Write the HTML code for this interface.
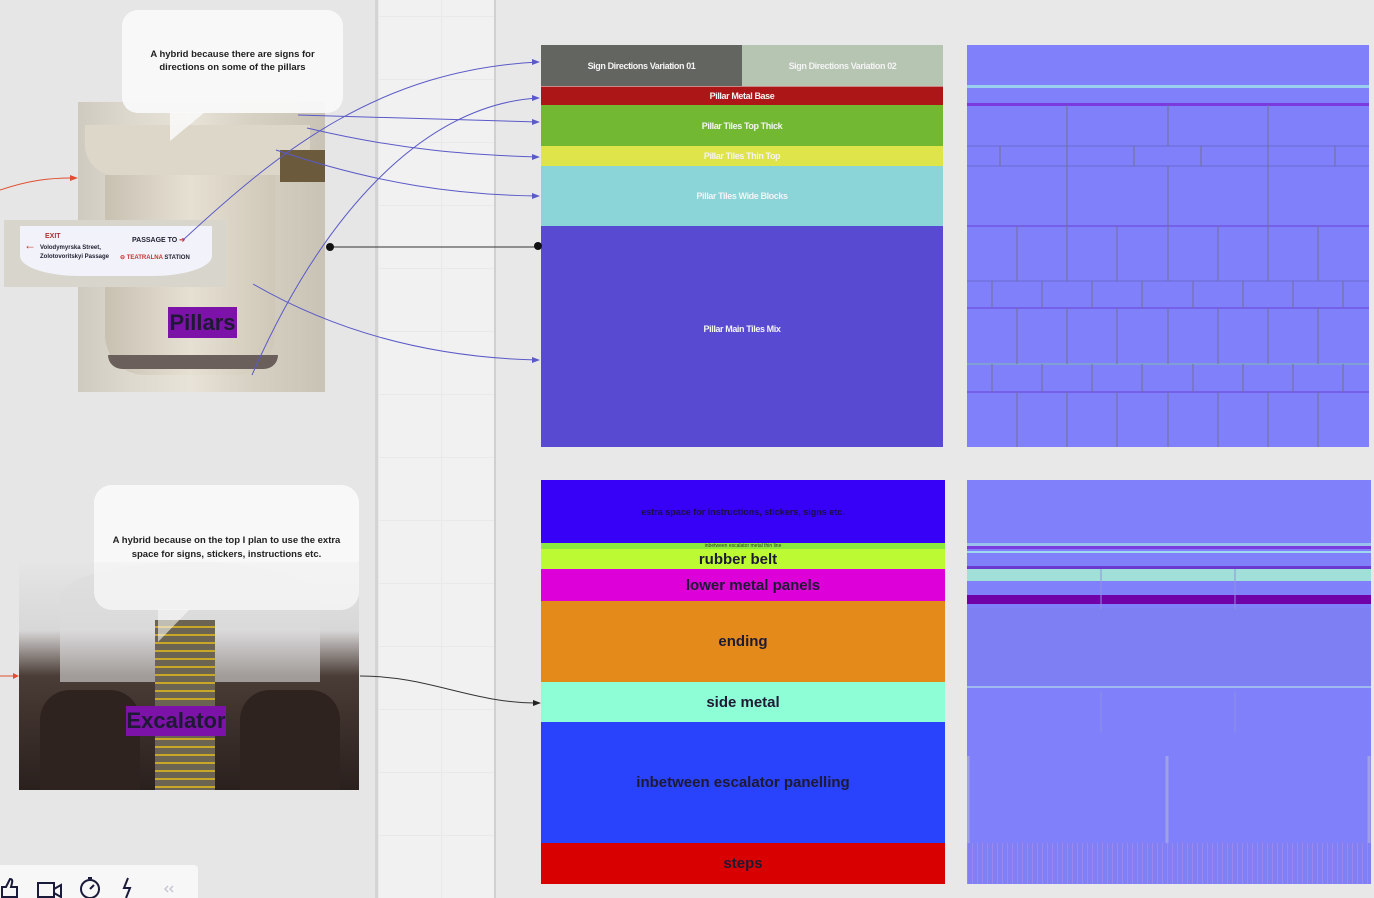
<!DOCTYPE html>
<html><head><meta charset="utf-8"><style>
*{margin:0;padding:0;box-sizing:border-box}
body{width:1374px;height:898px;overflow:hidden;background:#e6e6e6;position:relative;font-family:"Liberation Sans",sans-serif}
.a{position:absolute}
.c{display:flex;align-items:center;justify-content:center;text-align:center;font-family:"Liberation Sans",sans-serif}
.w{color:#f4f4f4;font-size:9px;font-weight:bold;letter-spacing:-0.4px}
.k{color:#1e1a33;font-weight:bold}
</style></head><body>
<div class="a" style="left:375px;top:0;width:3px;height:898px;background:#d4d4d4"></div>
<div class="a" style="left:378px;top:0;width:116px;height:898px;background:#f1f1f1;background-image:linear-gradient(#e9e9e9 1px,transparent 1px),linear-gradient(90deg,#e9e9e9 1px,transparent 1px);background-size:63px 63px;background-position:0 16px"></div>
<div class="a" style="left:494px;top:0;width:880px;height:898px;background:#e8e8e8;border-left:2px solid #d0d0d0"></div>

<!-- pillar photo -->
<div class="a" style="left:78px;top:102px;width:247px;height:290px;background:linear-gradient(90deg,#cfcac0 0%,#ddd8cd 20%,#e8e3d8 45%,#d7d1c4 70%,#c9c3b6 100%)"></div>
<div class="a" style="left:105px;top:175px;width:170px;height:200px;background:linear-gradient(90deg,#c8c1b2,#e6e0d3 50%,#cfc8b8);border-radius:0 0 40px 40px"></div>
<div class="a" style="left:85px;top:125px;width:225px;height:50px;background:#ddd7ca;border-radius:0 0 30px 30px"></div>
<div class="a" style="left:280px;top:150px;width:45px;height:32px;background:#6b5a3c"></div>
<div class="a" style="left:108px;top:355px;width:170px;height:14px;background:#6a5f5a;border-radius:0 0 30px 30px"></div>
<div class="a" style="left:4px;top:220px;width:222px;height:67px;background:#d8d6cc"></div>
<div class="a" style="left:20px;top:226px;width:192px;height:50px;background:#f2f2fa;border-radius:0 0 60px 60px/0 0 20px 20px"></div>
<div class="a" style="left:45px;top:233px;font-size:7px;color:#a33;font-weight:bold">EXIT</div>
<div class="a" style="left:24px;top:238px;font-size:12px;color:#c33">←</div>
<div class="a" style="left:40px;top:244px;font-size:6px;color:#223;font-weight:bold;line-height:9px">Volodymyrska Street,<br>Zolotovoritskyi Passage</div>
<div class="a" style="left:132px;top:236px;font-size:7px;color:#223;font-weight:bold">PASSAGE TO <span style="color:#c33">➔</span></div>
<div class="a" style="left:120px;top:254px;font-size:6px;color:#c33;font-weight:bold">⊖ TEATRALNA <span style="color:#223">STATION</span></div>
<div class="a c k" style="left:168px;top:307px;width:69px;height:31px;background:#7d12a8;font-size:22px">Pillars</div>

<!-- bubble 1 -->
<div class="a" style="left:122px;top:10px;width:221px;height:103px;background:rgba(248,248,248,.97);border-radius:16px"></div>
<svg class="a" style="left:170px;top:112px" width="50" height="30"><polygon points="0,0 0,29 35,0" fill="rgba(248,248,248,.9)"/></svg>
<div class="a c" style="left:130px;top:48px;width:205px;font-size:9.5px;color:#222;font-weight:bold;line-height:13px">A hybrid because there are signs for directions on some of the pillars</div>

<!-- escalator photo -->
<div class="a" style="left:19px;top:562px;width:340px;height:228px;background:linear-gradient(#e6e5e5 0%,#d8d7d7 30%,#4a3c36 50%,#2a201d 100%)"></div>
<div class="a" style="left:60px;top:562px;width:260px;height:120px;background:#dcdcdc;border-radius:50% 50% 0 0/30% 30% 0 0;opacity:.6"></div>
<div class="a" style="left:155px;top:620px;width:60px;height:170px;background:repeating-linear-gradient(#6b6452 0 6px,#c9a728 6px 8px)"></div>
<div class="a" style="left:40px;top:690px;width:100px;height:100px;background:#2f2320;border-radius:30px 30px 0 0"></div>
<div class="a" style="left:240px;top:690px;width:100px;height:100px;background:#2f2320;border-radius:30px 30px 0 0"></div>
<div class="a c k" style="left:126px;top:706px;width:100px;height:30px;background:#7d12a8;font-size:22px">Excalator</div>
<div class="a" style="left:94px;top:485px;width:265px;height:125px;background:rgba(248,248,248,.75);border-radius:18px"></div>
<div class="a" style="left:94px;top:485px;width:265px;height:77px;background:rgba(248,248,248,1);border-radius:18px 18px 0 0"></div>
<svg class="a" style="left:155px;top:609px" width="40" height="35"><polygon points="3,0 3,33 35,0" fill="rgba(248,248,248,.6)"/></svg>
<div class="a c" style="left:100px;top:534px;width:253px;font-size:9.5px;color:#222;font-weight:bold;line-height:14px">A hybrid because on the top I plan to use the extra space for signs, stickers, instructions etc.</div>

<!-- toolbar -->
<div class="a" style="left:0;top:865px;width:198px;height:33px;background:#f7f7f7;border-radius:0 4px 0 0"></div>
<svg class="a" style="left:0;top:875px" width="190" height="23" fill="none" stroke="#1a1a3a" stroke-width="2">
<path d="M2 22V12h4l4-8q3 0 2 4l-1 4h6v10z"/>
<rect x="38" y="8" width="16" height="14"/><path d="M54 14l7-4v12l-7-4"/>
<circle cx="90" cy="14" r="9"/><path d="M90 14l4-4M88 3h4"/>
<path d="M128 3l-4 10h6l-4 10"/>
<path d="M168 11l-3 3 3 3M173 11l-3 3 3 3" stroke="#c8c8d4" stroke-width="1.5"/>
</svg>

<!-- top table -->
<div class="a c w" style="left:541px;top:45px;width:201px;height:41px;background:#636660">Sign Directions Variation 01</div>
<div class="a c w" style="left:742px;top:45px;width:201px;height:41px;background:#b6c4b2">Sign Directions Variation 02</div>
<div class="a c w" style="left:541px;top:86px;width:402px;height:19px;background:#ad1616;border-top:1px solid #c88">Pillar Metal Base</div>
<div class="a c w" style="left:541px;top:105px;width:402px;height:41px;background:#73b833">Pillar Tiles Top Thick</div>
<div class="a c w" style="left:541px;top:146px;width:402px;height:20px;background:#dee44a">Pillar Tiles Thin Top</div>
<div class="a c w" style="left:541px;top:166px;width:402px;height:60px;background:#8bd4d8">Pillar Tiles Wide Blocks</div>
<div class="a c w" style="left:541px;top:226px;width:402px;height:221px;background:#584bd1;padding-bottom:16px">Pillar Main Tiles Mix</div>

<!-- top normal map -->
<svg class="a" style="left:967px;top:45px" width="402" height="402">
<rect width="402" height="402" fill="#8080fa"/>
<rect y="40" width="402" height="3" fill="#9ad0ee"/>
<rect y="58" width="402" height="3" fill="#7a3ae0"/>
<g stroke="#6a6ad0" stroke-width="1">
<line x1="0" y1="101" x2="402" y2="101"/><line x1="0" y1="121" x2="402" y2="121"/>
<line x1="0" y1="181" x2="402" y2="181" stroke="#6a40d8"/><line x1="0" y1="236" x2="402" y2="236"/>
<line x1="0" y1="263" x2="402" y2="263" stroke="#6a40d8"/><line x1="0" y1="319" x2="402" y2="319" stroke="#80c0b0"/>
<line x1="0" y1="347" x2="402" y2="347" stroke="#6a40d8"/>
</g>
<g stroke="#707090">
<path d="M100 60v41M201 60v41M301 60v41M33 101v20M100 101v20M167 101v20M234 101v20M301 101v20M368 101v20M100 121v60M201 121v60M301 121v60"/>
<path d="M50 181v55M100 181v55M150 181v55M201 181v55M251 181v55M301 181v55M351 181v55M25 236v27M75 236v27M125 236v27M175 236v27M226 236v27M276 236v27M326 236v27M376 236v27M50 263v56M100 263v56M150 263v56M201 263v56M251 263v56M301 263v56M351 263v56M25 319v28M75 319v28M125 319v28M175 319v28M226 319v28M276 319v28M326 319v28M376 319v28M50 347v55M100 347v55M150 347v55M201 347v55M251 347v55M301 347v55M351 347v55"/>
</g></svg>

<!-- bottom table -->
<div class="a c" style="left:541px;top:480px;width:404px;height:63px;background:#3700f7;font-size:9px;color:#1a1040;font-weight:bold">estra space for instructions, stickers, signs etc.</div>
<div class="a c" style="left:541px;top:543px;width:404px;height:6px;background:#8be83e;font-size:5px;color:#333">inbetween escalator metal thin line</div>
<div class="a c k" style="left:541px;top:549px;width:404px;height:20px;background:#bcfb34;font-size:15px;padding-right:10px">rubber belt</div>
<div class="a c k" style="left:541px;top:569px;width:404px;height:32px;background:#dd00d8;font-size:15px;padding-left:20px">lower metal panels</div>
<div class="a c k" style="left:541px;top:601px;width:404px;height:81px;background:#e48a1a;font-size:15px">ending</div>
<div class="a c k" style="left:541px;top:682px;width:404px;height:40px;background:#8efed6;font-size:15px">side metal</div>
<div class="a c k" style="left:541px;top:722px;width:404px;height:121px;background:#2942fb;font-size:15px">inbetween escalator panelling</div>
<div class="a c k" style="left:541px;top:843px;width:404px;height:41px;background:#d80000;font-size:15px">steps</div>

<!-- bottom normal map -->
<svg class="a" style="left:967px;top:480px" width="404" height="404">
<defs><pattern id="st" width="5" height="10" patternUnits="userSpaceOnUse"><rect width="5" height="10" fill="#8080f4"/><rect width="1" height="10" fill="#9a88f0"/></pattern></defs>
<rect width="404" height="404" fill="#8080fa"/>
<rect y="63" width="404" height="3" fill="#9ac0ee"/><rect y="66" width="404" height="3" fill="#7a3ae0"/>
<rect y="71" width="404" height="2" fill="#a0d8f0"/><rect y="86" width="404" height="3" fill="#6a3ad0"/>
<rect y="89" width="404" height="12" fill="#a0e0d8"/><rect y="115" width="404" height="9" fill="#7000a8"/>
<rect y="128" width="404" height="78" fill="#7f7ff4"/>
<rect y="206" width="404" height="2" fill="#a0b8f0"/>
<path d="M134 89v40M268 89v40M134 212v40M268 212v40" stroke="#9090e0"/>
<path d="M1 276v126M200 276v126M402 276v126" stroke="#a0a0e8" stroke-width="3"/>
<rect y="363" width="404" height="41" fill="url(#st)"/>
</svg>

<!-- connectors -->
<svg class="a" style="left:0;top:0" width="1374" height="898" fill="none">
<g stroke="#5a5ac8" stroke-width="1">
<path d="M183 240C280 150 380 70 538 62"/>
<path d="M298 115C400 118 470 120 538 122"/>
<path d="M307 128C400 150 470 155 538 157"/>
<path d="M276 150C380 185 460 195 538 196"/>
<path d="M252 375C320 220 420 105 538 98"/>
<path d="M253 284C350 340 450 358 538 360"/>
</g>
<g fill="#5a5ac8"><path d="M540 62l-8-3v6zM540 122l-8-3v6zM540 157l-8-3v6zM540 196l-8-3v6zM540 98l-8-3v6zM540 360l-8-3v6z"/></g>
<path d="M330 247H538" stroke="#333"/><circle cx="330" cy="247" r="4" fill="#111"/><circle cx="538" cy="246" r="4" fill="#111"/>
<path d="M360 676C430 676 470 703 538 703" stroke="#333"/><path d="M541 703l-8-3v6z" fill="#222"/>
<path d="M0 190C30 180 50 178 72 178" stroke="#e05030"/><path d="M78 178l-8-3v6z" fill="#e05030"/>
<path d="M0 676H14" stroke="#e05030"/><path d="M19 676l-6-3v6z" fill="#e05030"/>
</svg>
</body></html>
